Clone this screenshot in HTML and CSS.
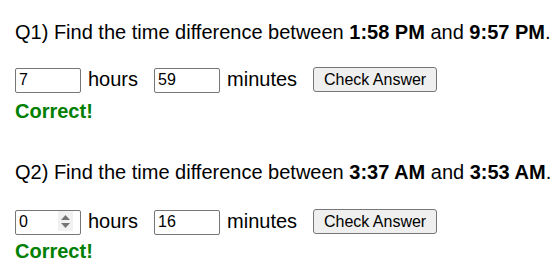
FILE: index.html
```html
<!DOCTYPE html>
<html>
<head>
<meta charset="utf-8">
<link rel="stylesheet" href="styles.css">
</head>
<body>
<div class="quiz">
  <div class="question">
    <p class="prompt">Q1) Find the time difference between <b>1:58 PM</b> and <b>9:57 PM</b>.</p>
    <div class="answer-row">
      <span class="field"><input class="num" type="text" value="7"></span>
      <span class="unit">hours</span>
      <span class="field"><input class="num" type="text" value="59"></span>
      <span class="unit">minutes</span>
      <button class="check">Check Answer</button>
    </div>
    <div class="result">Correct!</div>
  </div>
  <div class="question">
    <p class="prompt">Q2) Find the time difference between <b>3:37 AM</b> and <b>3:53 AM</b>.</p>
    <div class="answer-row answer-row-hover">
      <span class="field"><input class="num" type="text" value="0">
        <span class="spinner"><svg width="15" height="20" viewBox="0 0 15 20"><path d="M7.5 4 L12 9 H3 Z" fill="#757575"/><path d="M7.5 17 L12 12 H3 Z" fill="#757575"/></svg></span>
      </span>
      <span class="unit">hours</span>
      <span class="field"><input class="num" type="text" value="16"></span>
      <span class="unit">minutes</span>
      <button class="check">Check Answer</button>
    </div>
    <div class="result result-hover">Correct!</div>
  </div>
</div>
</body>
</html>
```
FILE: styles.css
```css
html, body {
  margin: 0;
  padding: 0;
  background: #fff;
}
body {
  font-family: "Liberation Sans", Arial, sans-serif;
  font-size: 20px;
  color: #000;
}
.quiz {
  padding: 21px 15px 0 15px;
}
.question + .question {
  margin-top: 38px;
}
.prompt {
  margin: 0;
  line-height: 23px;
  white-space: nowrap;
}
.answer-row {
  display: flex;
  align-items: center;
  margin-top: 23px;
  height: 25px;
}
.answer-row-hover {
  margin-top: 25px;
}
.field {
  position: relative;
  display: inline-block;
  height: 25px;
}
.num {
  box-sizing: border-box;
  width: 66px;
  height: 25px;
  margin: 0;
  padding: 0 3px;
  border: 1px solid #767676;
  border-radius: 2px;
  font-family: "Liberation Sans", Arial, sans-serif;
  font-size: 16px;
  color: #000;
  background: #fff;
  outline: none;
}
.spinner {
  position: absolute;
  left: 43px;
  top: 2px;
  width: 15px;
  height: 20px;
  background: #f1f1f1;
  display: block;
}
.spinner svg {
  display: block;
}
.unit {
  line-height: 23px;
  margin-left: 7px;
  margin-right: 16px;
}
.check {
  box-sizing: border-box;
  width: 124px;
  height: 25px;
  margin: 0;
  padding: 0;
  border: 1px solid #767676;
  border-radius: 3px;
  background: #efefef;
  font-family: "Liberation Sans", Arial, sans-serif;
  font-size: 16px;
  color: #000;
}
.result {
  margin-top: 8px;
  line-height: 23px;
  font-weight: bold;
  color: #008000;
}
.result-hover {
  margin-top: 6px;
}
```
